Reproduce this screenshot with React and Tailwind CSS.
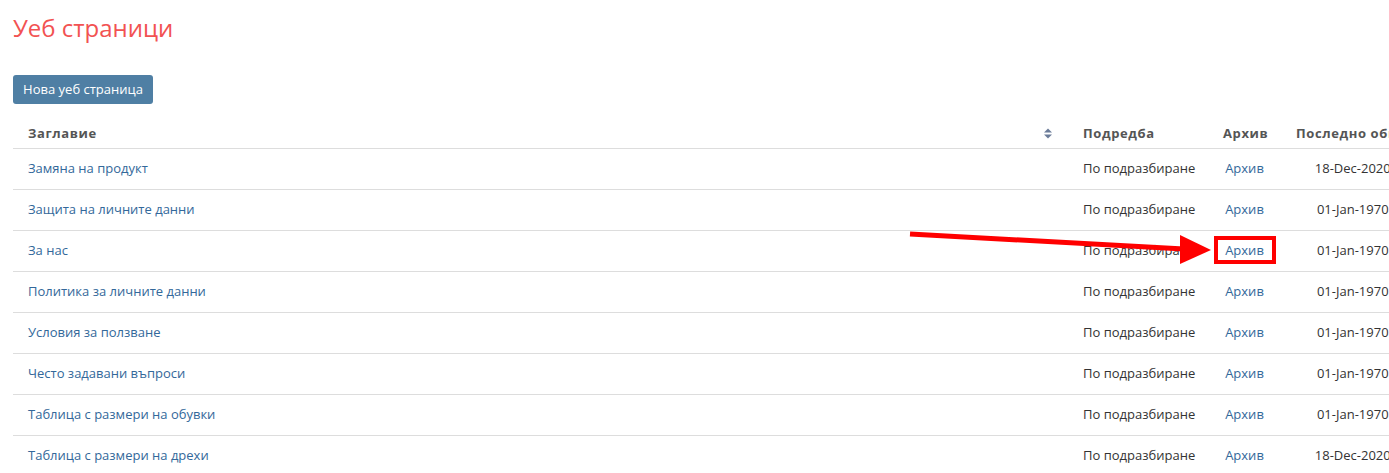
const ROWS = [
  { title: 'Замяна на продукт', date: '18-Dec-2020 11:42' },
  { title: 'Защита на личните данни', date: '01-Jan-1970 02:00' },
  { title: 'За нас', date: '01-Jan-1970 02:00' },
  { title: 'Политика за личните данни', date: '01-Jan-1970 02:00' },
  { title: 'Условия за ползване', date: '01-Jan-1970 02:00' },
  { title: 'Често задавани въпроси', date: '01-Jan-1970 02:00' },
  { title: 'Таблица с размери на обувки', date: '01-Jan-1970 02:00' },
  { title: 'Таблица с размери на дрехи', date: '18-Dec-2020 11:42' },
];

function SortIcon() {
  return (
    <svg width="8" height="11" viewBox="0 0 8 11" className="inline-block">
      <path d="M0 4.5 L4 0.5 L8 4.5 Z" fill="#6b7c99" />
      <path d="M0 6.5 L4 10.5 L8 6.5 Z" fill="#6b7c99" />
    </svg>
  );
}

export default function App() {
  return (
    <div className="relative w-[1389px] h-[473px] overflow-hidden bg-white text-[13px] text-[#333]" style={{ fontFamily: '"Open Sans", "Noto Sans", sans-serif' }}>
      <div className="pl-[13px] pt-[14px]">
        <h1 className="text-[24px] leading-[28px] font-normal text-[#f25252]">Уеб страници</h1>

        <button className="mt-[33px] h-[29px] w-[140px] rounded-[3px] bg-[#4f7fa4] text-white text-[13px]">Нова уеб страница</button>

        <table className="mt-[16px] table-fixed border-collapse w-[1448px]">
          <colgroup>
            <col className="w-[1055px]" />
            <col className="w-[140px]" />
            <col className="w-[73px]" />
            <col className="w-[180px]" />
          </colgroup>
          <thead>
            <tr className="text-left text-[#555] font-semibold tracking-[0.6px]">
              <th className="px-[15px] h-[28px] align-middle">
                <div className="flex items-center justify-between pr-[1px]">
                  <span>Заглавие</span>
                  <SortIcon />
                </div>
              </th>
              <th className="px-[15px] align-middle">Подредба</th>
              <th className="px-[15px] align-middle whitespace-nowrap">Архив</th>
              <th className="px-[15px] align-middle whitespace-nowrap">Последно обновяване</th>
            </tr>
          </thead>
          <tbody>
            {ROWS.map((r) => (
              <tr key={r.title} className="border-t border-[#dddddd] h-[41px]">
                <td className="px-[15px] align-middle text-[#33689a]">{r.title}</td>
                <td className="px-[15px] align-middle whitespace-nowrap">По подразбиране</td>
                <td className="px-[15px] align-middle text-center text-[#33689a]">Архив</td>
                <td className="px-[15px] align-middle text-center whitespace-nowrap">{r.date}</td>
              </tr>
            ))}
          </tbody>
        </table>
      </div>

      <svg className="absolute left-0 top-0 pointer-events-none" width="1389" height="473">
        <line x1="910" y1="234" x2="1184" y2="249" stroke="#ff0000" strokeWidth="5" />
        <polygon points="1180,235 1211,250 1180,264" fill="#ff0000" />
      </svg>
      <div className="absolute left-[1214px] top-[236px] w-[62px] h-[28px] border-4 border-[#ff0000]" />
    </div>
  );
}
